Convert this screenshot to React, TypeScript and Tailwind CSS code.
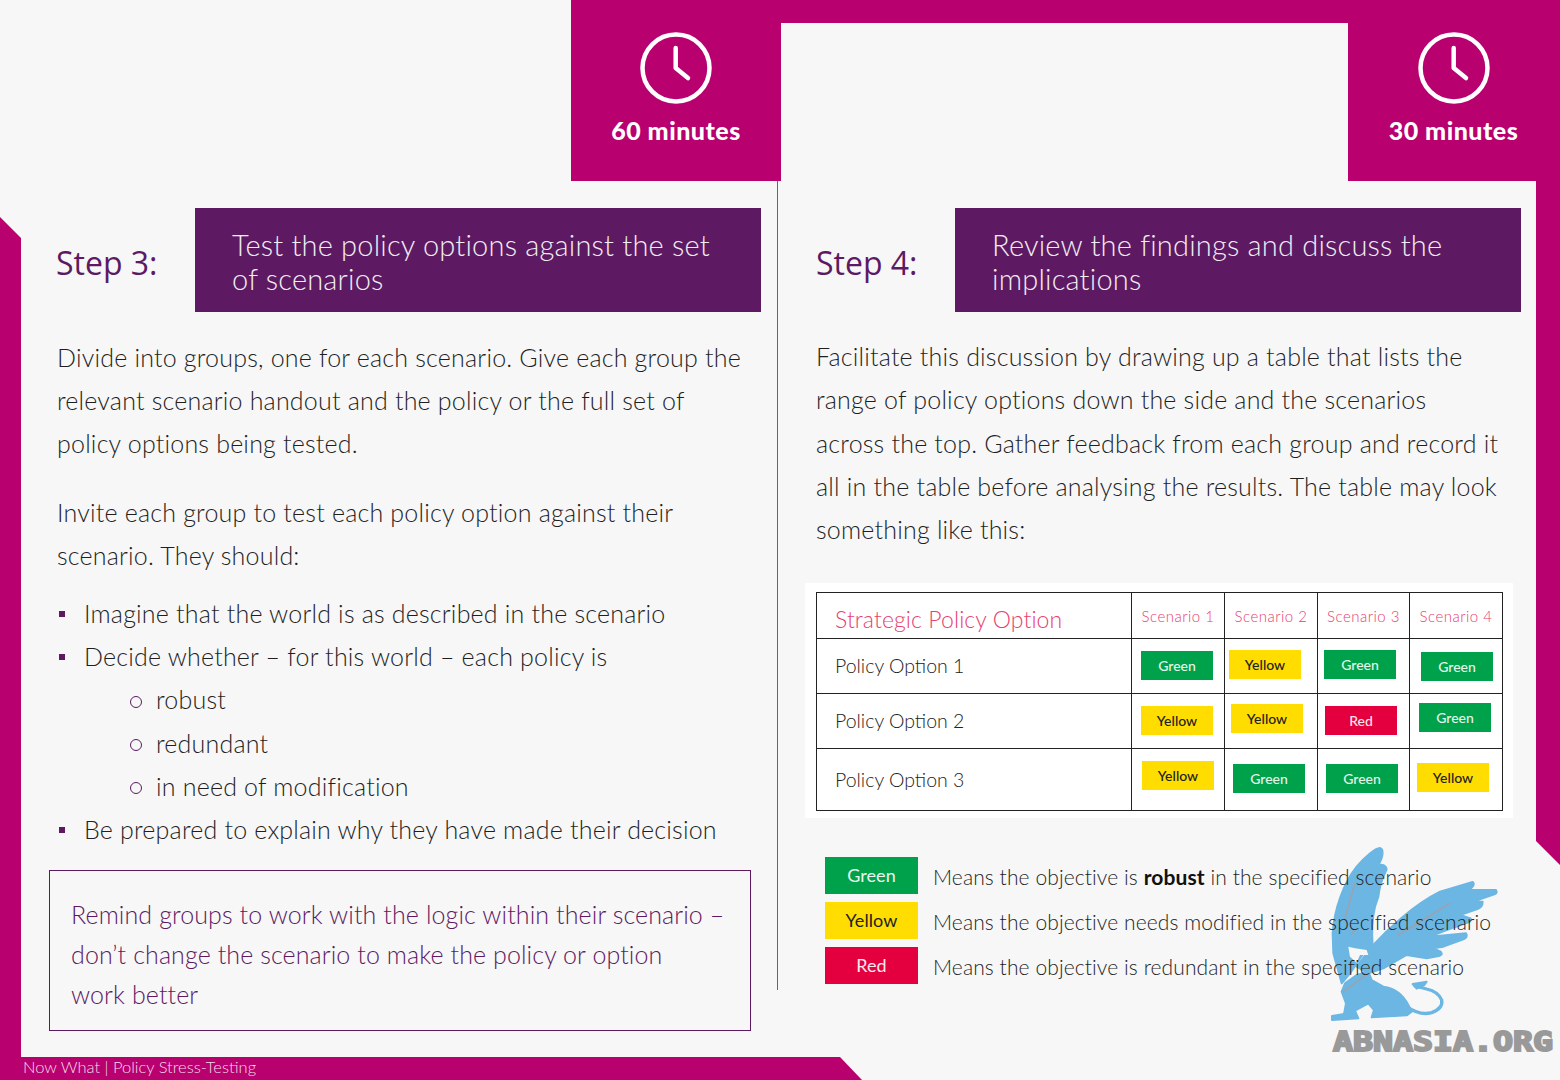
const bodyFont = "font-['Lato','Noto_Sans',sans-serif]"

function Clock() {
  return (
    <svg width="72" height="72" viewBox="0 0 72 72" fill="none" stroke="white" strokeWidth="4.5" strokeLinecap="round" strokeLinejoin="round">
      <circle cx="36" cy="36" r="33.5" />
      <path d="M35.7 16 V36 L48 46" />
    </svg>
  )
}

function TimeBox({ label, className }: { label: string; className: string }) {
  return (
    <div className={`flex h-[181px] flex-col items-center bg-[#b9006f] pt-[32px] ${className}`}>
      <Clock />
      <div className="mt-[11px] text-[25px] leading-[30px] font-black tracking-[0.5px] text-white">{label}</div>
    </div>
  )
}

function StepHeader({ step, title }: { step: string; title: React.ReactNode }) {
  return (
    <div className="mt-[27px] flex items-center">
      <div className="w-[139px] pt-[6px] font-['Open_Sans',sans-serif] text-[32px] leading-[40px] font-normal text-[#5d1a63]">{step}</div>
      <div className="flex h-[104px] w-[566px] items-center bg-[#5d1a63] pt-[4px] pl-[37px] text-[29px] leading-[34px] font-light tracking-[0.2px] text-[#f1eef2]">
        <div>{title}</div>
      </div>
    </div>
  )
}

const chip = 'flex h-[29px] w-[72px] items-center justify-center pb-[1px] font-[\'Roboto\',sans-serif] text-[14px] font-medium'
const green = 'bg-[#00a14b] text-[#e4f5ea]'
const yellow = 'bg-[#ffdd00] text-[#222]'
const red = 'bg-[#e4003f] text-[#fbe4ea]'

const rows = [
  {
    name: 'Policy Option 1',
    cells: [
      { label: 'Green', cls: `${green} ml-[9px] mt-[12px]` },
      { label: 'Yellow', cls: `${yellow} ml-[4px] mt-[11px]` },
      { label: 'Green', cls: `${green} ml-[6px] mt-[11px]` },
      { label: 'Green', cls: `${green} ml-[11px] mt-[13px]` },
    ],
  },
  {
    name: 'Policy Option 2',
    cells: [
      { label: 'Yellow', cls: `${yellow} ml-[9px] mt-[12px]` },
      { label: 'Yellow', cls: `${yellow} ml-[6px] mt-[10px]` },
      { label: 'Red', cls: `${red} ml-[7px] mt-[12px]` },
      { label: 'Green', cls: `${green} ml-[9px] mt-[9px]` },
    ],
  },
  {
    name: 'Policy Option 3',
    cells: [
      { label: 'Yellow', cls: `${yellow} ml-[10px] mt-[12px]` },
      { label: 'Green', cls: `${green} ml-[8px] mt-[15px]` },
      { label: 'Green', cls: `${green} ml-[8px] mt-[15px]` },
      { label: 'Yellow', cls: `${yellow} ml-[7px] mt-[14px]` },
    ],
  },
]

const cell = 'border-r border-b border-[#222]'

function PolicyTable() {
  return (
    <div className="ml-[27px] h-[235px] w-[708px] bg-white pt-[9px] pl-[11px]">
      <div className="grid w-[687px] grid-cols-[315px_93px_93px_92px_93px] grid-rows-[46px_55px_55px_62px] border-t border-l border-[#222]">
        <div className={`${cell} pt-[11px] pl-[18px] text-[23px] leading-[30px] font-light tracking-[0.1px] text-[#e8406f]`}>Strategic Policy Option</div>
        {['Scenario 1', 'Scenario 2', 'Scenario 3', 'Scenario 4'].map((s) => (
          <div key={s} className={`${cell} pt-[13px] text-center text-[15px] leading-[20px] font-light tracking-[0.5px] text-[#e8406f]`}>{s}</div>
        ))}
        {rows.map((r) => (
          <div key={r.name} className="contents">
            <div className={`${cell} flex items-center pb-[1px] pl-[18px] text-[19.5px] font-light text-[#222]`}>{r.name}</div>
            {r.cells.map((c, i) => (
              <div key={i} className={cell}>
                <div className={`${chip} ${c.cls}`}>{c.label}</div>
              </div>
            ))}
          </div>
        ))}
      </div>
    </div>
  )
}

function Griffin() {
  return (
    <svg className="absolute top-[840px] left-[1300px] z-0" width="260" height="240" viewBox="0 0 780 720">
      <g fill="#6cb6e3" stroke="#6cb6e3" strokeWidth="6" strokeLinejoin="round">
        <path d="M125 430 L100 340 L98 280 C102 210 130 130 170 80 C195 50 225 25 240 24 C252 28 250 50 235 75 C250 72 260 78 260 88 C250 110 240 125 235 170 L225 200 C215 240 215 280 218 320 L190 340 L150 400 Z" />
        <path d="M215 320 C260 270 340 195 420 155 L518 126 C525 132 520 142 505 150 L588 150 C592 155 590 160 585 162 L520 185 L548 185 C548 198 540 205 530 208 L480 225 L512 235 C515 240 510 245 505 247 L440 270 L390 290 L498 280 C503 288 500 295 490 298 L430 320 L400 325 L422 335 C428 342 425 345 420 347 L380 355 L320 345 L250 385 L205 400 L170 380 Z" />
        <path d="M125 455 L135 430 L170 405 L205 395 L215 420 L250 440 C285 445 310 465 325 495 L335 515 L320 526 L215 532 L222 510 L205 490 L165 512 L175 535 L96 540 L96 528 L132 522 L138 490 Z" />
        <path d="M338 432 L380 425 L372 436 L350 446 Z" />
      </g>
      <path d="M320 500 Q360 528 395 518 Q430 505 425 480 Q415 455 380 447 L345 438" fill="none" stroke="#6cb6e3" strokeWidth="10" strokeLinecap="round" />
      <path d="M145 320 L165 325 L200 330 L205 345 L180 345 L170 368 L150 350 Z" fill="#f7f7f7" />
      <g fill="none" stroke="#9aa3b2" strokeWidth="5" strokeLinecap="round">
        <path d="M135 235 L165 130" />
        <path d="M295 285 L450 190" />
        <path d="M130 455 L205 400" />
        <path d="M155 285 L165 265" />
      </g>
    </svg>
  )
}

export default function App() {
  return (
    <div className={`relative flex h-[1080px] w-[1560px] flex-col overflow-hidden bg-[#f7f7f7] font-light text-[#1f1f1f] ${bodyFont}`}>
      <Griffin />
      <div className="absolute top-[1027px] left-[1333px] z-10 origin-left scale-x-[1.23] font-['DejaVu_Sans_Mono',monospace] text-[27px] leading-[30px] font-bold text-[#999] [-webkit-text-stroke:2px_#999]">ABNASIA.ORG</div>

      {/* top strip */}
      <div className="flex">
        <div className="w-[571px]" />
        <TimeBox label="60 minutes" className="w-[210px]" />
        <div className="h-[23px] flex-1 bg-[#b9006f]" />
        <TimeBox label="30 minutes" className="w-[212px] pr-[1px]" />
      </div>

      <div className="flex flex-1">
        <div className="mt-[36px] w-[21px] bg-[#b9006f] [clip-path:polygon(0_0,100%_21px,100%_100%,0_100%)]" />

        {/* Step 3 */}
        <div className="w-[756px] pl-[35px]">
          <StepHeader step="Step 3:" title={<>Test the policy options against the set<br />of scenarios</>} />
          <p className="mt-[24px] pl-[1px] text-[25px] leading-[43px] tracking-[0.2px]">
            Divide into groups, one for each scenario. Give each group the<br />
            relevant scenario handout and the policy or the full set of<br />
            policy options being tested.
          </p>
          <p className="mt-[26px] pl-[1px] text-[25px] leading-[43px] tracking-[0.2px]">
            Invite each group to test each policy option against their<br />
            scenario. They should:
          </p>
          <ul className="mt-[15px] text-[25px] leading-[43.2px] tracking-[0.2px]">
            <li className="flex items-center"><span className="mr-[19px] ml-[3px] h-[6px] w-[6px] bg-[#5d1a63]" />Imagine that the world is as described in the scenario</li>
            <li className="flex items-center"><span className="mr-[19px] ml-[3px] h-[6px] w-[6px] bg-[#5d1a63]" />Decide whether – for this world – each policy is</li>
            {['robust', 'redundant', 'in need of modification'].map((t) => (
              <li key={t} className="flex items-center pl-[74px]">
                <span className="mt-[4px] mr-[14px] h-[12px] w-[12px] rounded-full border border-[#5d1a63]" />{t}
              </li>
            ))}
            <li className="flex items-center"><span className="mr-[19px] ml-[3px] h-[6px] w-[6px] bg-[#5d1a63]" />Be prepared to explain why they have made their decision</li>
          </ul>
          <div className="mt-[19px] -ml-[7px] h-[161px] w-[702px] border border-[#5d1a63] pt-[23px] pl-[21px] text-[25px] leading-[40px] tracking-[0.1px] text-[#5d1a63]">
            Remind groups to work with the logic within their scenario –<br />
            don’t change the scenario to make the policy or option<br />
            work better
          </div>
        </div>

        <div className="h-[809px] w-px bg-[#b23a94]" />

        {/* Step 4 */}
        <div className="w-[758px]">
          <div className="pl-[38px]">
            <StepHeader step="Step 4:" title={<>Review the findings and discuss the<br />implications</>} />
            <p className="mt-[23px] text-[25px] leading-[43.25px] tracking-[0.2px]">
              Facilitate this discussion by drawing up a table that lists the<br />
              range of policy options down the side and the scenarios<br />
              across the top. Gather feedback from each group and record it<br />
              all in the table before analysing the results. The table may look<br />
              something like this:
            </p>
          </div>
          <div className="mt-[32px]">
            <PolicyTable />
          </div>
          <div className="relative z-10 mt-[39px] ml-[47px] flex flex-col gap-[8px] text-[21px] tracking-[0.1px]">
            <div className="flex h-[37px] items-center">
              <div className="flex h-[37px] w-[93px] items-center justify-center bg-[#00a14b] text-[18px] font-normal text-[#eaf7ef]">Green</div>
              <div className="ml-[15px] pt-[2px]">Means the objective is <b className="font-bold text-[#111]">robust</b> in the specified scenario</div>
            </div>
            <div className="flex h-[37px] items-center">
              <div className="flex h-[37px] w-[93px] items-center justify-center bg-[#ffdd00] text-[18px] font-normal text-[#222]">Yellow</div>
              <div className="ml-[15px] pt-[2px]">Means the objective needs modified in the specified scenario</div>
            </div>
            <div className="flex h-[37px] items-center">
              <div className="flex h-[37px] w-[93px] items-center justify-center bg-[#e4003f] text-[18px] font-normal text-[#fbe9ee]">Red</div>
              <div className="ml-[15px] pt-[2px]">Means the objective is redundant in the specified scenario</div>
            </div>
          </div>
        </div>

        <div className="h-[684px] w-[24px] bg-[#b9006f] [clip-path:polygon(0_0,100%_0,100%_100%,0_660px)]" />
      </div>

      {/* footer */}
      <div className="flex h-[23px] w-[862px] items-center bg-[#b9006f] pb-[3px] pl-[23px] text-[16.5px] text-[#f4dbea] [clip-path:polygon(0_0,840px_0,100%_100%,0_100%)]">
        Now What | Policy Stress-Testing
      </div>
    </div>
  )
}
